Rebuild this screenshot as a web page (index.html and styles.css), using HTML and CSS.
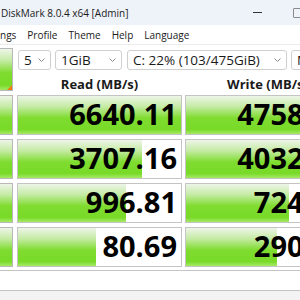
FILE: index.html
```html
<!DOCTYPE html>
<html lang="en">
<head>
  <meta charset="UTF-8">
  <title>CrystalDiskMark 8.0.4 x64 [Admin]</title>
  <link rel="stylesheet" href="styles.css">
</head>
<body>
  <div class="window">
    <div class="titlebar">
      <span class="title">DiskMark 8.0.4 x64 [Admin]</span>
      <span class="min"></span>
      <span class="max"></span>
    </div>
    <div class="menubar">
      <span class="menu first">ngs</span>
      <span class="menu">Profile</span>
      <span class="menu">Theme</span>
      <span class="menu">Help</span>
      <span class="menu">Language</span>
    </div>

    <div class="main">
      <div class="top">
        <button class="all"><span class="corner"></span></button>
        <div class="controls">
          <div class="combos">
            <div class="combo count">5<svg class="chev" width="7" height="4" viewBox="0 0 7 4"><polyline points="0.5,0.5 3.5,3.5 6.5,0.5" fill="none" stroke="#8a8a8a" stroke-width="1"/></svg></div>
            <div class="combo size">1GiB<svg class="chev" width="7" height="4" viewBox="0 0 7 4"><polyline points="0.5,0.5 3.5,3.5 6.5,0.5" fill="none" stroke="#8a8a8a" stroke-width="1"/></svg></div>
            <div class="combo drive">C: 22% (103/475GiB)<svg class="chev" width="7" height="4" viewBox="0 0 7 4"><polyline points="0.5,0.5 3.5,3.5 6.5,0.5" fill="none" stroke="#8a8a8a" stroke-width="1"/></svg></div>
            <div class="combo unit">MB/s</div>
          </div>
          <div class="heads">
            <div class="head">Read (MB/s)</div>
            <div class="head">Write (MB/s)</div>
          </div>
        </div>
      </div>

      <div class="row">
        <div class="label"></div>
        <div class="cell"><div class="bar" style="width: 100%"></div><span class="num">6640.11</span></div>
        <div class="cell"><div class="bar" style="width: 100%"></div><span class="num">4758.29</span></div>
      </div>
      <div class="row">
        <div class="label"></div>
        <div class="cell"><div class="bar" style="width: 76%"></div><span class="num">3707.16</span></div>
        <div class="cell"><div class="bar" style="width: 100%"></div><span class="num">4032.48</span></div>
      </div>
      <div class="row">
        <div class="label"></div>
        <div class="cell"><div class="bar" style="width: 66%"></div><span class="num">996.81</span></div>
        <div class="cell"><div class="bar" style="width: 63%"></div><span class="num">724.31</span></div>
      </div>
      <div class="row">
        <div class="label"></div>
        <div class="cell"><div class="bar" style="width: 48%"></div><span class="num">80.69</span></div>
        <div class="cell"><div class="bar" style="width: 56%"></div><span class="num">290.69</span></div>
      </div>
    </div>

    <div class="comment"></div>
    <div class="status"></div>
  </div>
</body>
</html>
```

FILE: styles.css
```css
body {
  margin: 0;
  background: #ffffff;
  font-family: "Open Sans", "Noto Sans", sans-serif;
  color: #1a1a1a;
}
.window {
  width: 300px;
  height: 300px;
  overflow: hidden;
}
.titlebar {
  height: 25px;
  background: #eef2f9;
  display: flex;
  align-items: center;
  font-size: 10px;
}
.title {
  padding-left: 1px;
  flex: 1;
}
.min {
  width: 9px;
  height: 1px;
  background: #333;
  margin-right: 31px;
}
.max {
  width: 8px;
  height: 8px;
  border: 1px solid #8a8a8a;
  border-radius: 1px;
  margin-right: -3px;
}
.menubar {
  height: 19px;
  display: flex;
  align-items: center;
  font-size: 10px;
  border-bottom: 1px solid #ececec;
  white-space: nowrap;
}
.menu {
  margin-left: 11px;
}
.menu.first {
  margin-left: 0;
}
.main {
  padding-top: 3px;
}
.top {
  display: flex;
  gap: 4px;
}
.all {
  flex: none;
  width: 13px;
  height: 43px;
  padding: 0;
  border: 1px solid #b8b8b8;
  border-left: none;
  background: linear-gradient(#eef5e8 0%, #c5eba5 28%, #7fdc2f 58%, #79da28 88%, #a6ea66 100%);
  position: relative;
}
.corner {
  position: absolute;
  right: 0;
  bottom: 0;
  width: 0;
  height: 0;
  border-left: 5px solid transparent;
  border-bottom: 5px solid #f07a10;
}
.controls {
  flex: 1;
  white-space: nowrap;
}
.combos {
  display: flex;
  gap: 4px;
  padding-top: 2px;
  margin-left: 1px;
}
.combo {
  height: 18px;
  border: 1px solid #cfcfcf;
  border-radius: 3px;
  background: #fff;
  font-size: 13.5px;
  line-height: 18px;
  padding-left: 5px;
  display: flex;
  align-items: center;
  flex: none;
}
.chev {
  margin-left: auto;
  margin-right: 5px;
}
.count { width: 26px; }
.size { width: 60px; }
.drive { width: 153px; margin-left: 1px; }
.unit { width: 60px; }
.heads {
  display: flex;
  gap: 3px;
  padding-top: 7px;
}
.head {
  width: 165px;
  flex: none;
  text-align: center;
  font-weight: bold;
  font-size: 13px;
  line-height: 14px;
}
.row {
  display: flex;
  gap: 4px;
  margin-top: 4px;
}
.label {
  flex: none;
  width: 12px;
  height: 38px;
  border: 1px solid #b8b8b8;
  border-left: none;
  background: linear-gradient(#eef5e8 0%, #c5eba5 28%, #7fdc2f 58%, #79da28 88%, #a6ea66 100%);
}
.cell {
  width: 163px;
  height: 38px;
  flex: none;
  border: 1px solid #c4c4c4;
  background: #fff;
  position: relative;
}
.cell + .cell {
  margin-left: -1px;
}
.bar {
  height: 100%;
  background: linear-gradient(#eef5e8 0%, #c5eba5 28%, #7fdc2f 58%, #79da28 88%, #a6ea66 100%);
}
.num {
  position: absolute;
  right: 4px;
  top: -1px;
  line-height: 38px;
  font-size: 29px;
  font-weight: bold;
  color: #000;
}
.comment {
  margin-top: 3px;
  height: 19px;
  border-top: 1px solid #c4c4c4;
  border-bottom: 1px solid #c4c4c4;
  background: #fff;
}
.status {
  height: 20px;
  background: #f3f3f3;
}
```
